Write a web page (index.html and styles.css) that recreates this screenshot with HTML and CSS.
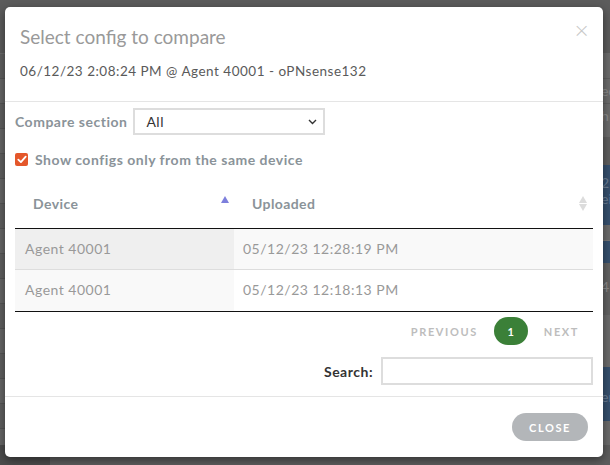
FILE: index.html
```html
<!DOCTYPE html>
<html>
<head>
<meta charset="utf-8">
<link rel="stylesheet" href="styles.css">
</head>
<body>
<div class="page">
  <div class="page-top"></div>
  <div class="page-main">
    <div class="page-left"></div>
    <div class="page-center"></div>
    <div class="page-right">
      <div class="pr r1"></div>
      <div class="pr r2">ed</div>
      <div class="pr r3">h</div>
      <div class="pr r4"></div>
      <div class="pr r5 blue">2<br>ei</div>
      <div class="pr r6"></div>
      <div class="pr r7 blue"></div>
      <div class="pr r8">4</div>
      <div class="pr r9"></div>
      <div class="pr r10 blue">er</div>
      <div class="pr r11"></div>
    </div>
  </div>
  <div class="page-bottom"><div class="pb-left"></div></div>
</div>

<div class="modal">
  <div class="modal-header">
    <div class="modal-title">Select config to compare</div>
    <div class="modal-sub">06/12/23 2:08:24 PM @ Agent 40001 - oPNsense132</div>
    <span class="modal-x">&times;</span>
  </div>
  <div class="modal-body">
    <div class="compare-row">
      <label class="lbl">Compare section</label>
      <div class="select">
        <span>All</span>
        <svg class="chev" width="9" height="6" viewBox="0 0 9 6"><path d="M1 1 L4.5 4.5 L8 1" fill="none" stroke="#333" stroke-width="1.4"/></svg>
      </div>
    </div>
    <div class="check-row">
      <span class="checkbox">
        <svg width="10" height="9" viewBox="0 0 10 9"><path d="M1.3 4.6 L3.9 7.1 L8.7 1.6" fill="none" stroke="#fff" stroke-width="1.8" stroke-linecap="round" stroke-linejoin="round"/></svg>
      </span>
      <span class="lbl">Show configs only from the same device</span>
    </div>
    <div class="table">
      <div class="tr th">
        <div class="c1 hcell">Device<span class="sort-up"></span></div>
        <div class="c2 hcell">Uploaded
          <span class="sort-both"><i class="up"></i><i class="down"></i></span>
        </div>
      </div>
      <div class="tr odd">
        <div class="c1">Agent 40001</div>
        <div class="c2">05/12/23 12:28:19 PM</div>
      </div>
      <div class="tr even">
        <div class="c1">Agent 40001</div>
        <div class="c2">05/12/23 12:18:13 PM</div>
      </div>
    </div>
    <div class="pager">
      <span class="pg">PREVIOUS</span>
      <span class="pg-cur">1</span>
      <span class="pg">NEXT</span>
    </div>
    <div class="search-row">
      <span class="search-lbl">Search:</span>
      <span class="search-input"></span>
    </div>
  </div>
  <div class="modal-footer">
    <span class="btn-close">CLOSE</span>
  </div>
</div>
</body>
</html>
```
FILE: styles.css
```css
* { box-sizing: border-box; }
html, body { margin: 0; padding: 0; }
body {
  width: 610px;
  height: 465px;
  overflow: hidden;
  font-family: Lato, "Open Sans", sans-serif;
  background: #626262;
  position: relative;
}
.page { width: 610px; height: 465px; display: flex; flex-direction: column; }
.page-top { height: 54px; background: #5c5c5c; border-bottom: 1px solid #6c6c6c; }
.page-main { flex: 1; display: flex; }
.page-left {
  width: 50px;
  background: repeating-linear-gradient(180deg, #5f5f5f 0 24px, #545454 24px 25px, #666 25px 49px, #555 49px 50px);
}
.page-center { flex: 1; background: #6a6a6a; }
.page-right { width: 12px; display: flex; flex-direction: column; background: #6b6b6b; color: #8d8d8d; font-size: 14px; line-height: 16px; overflow: hidden; white-space: nowrap; }
.pr { padding-left: 3px; }
.r1 { height: 24px; }
.r2 { height: 25px; border-top: 1px solid #5e5e5e; padding-top: 4px; }
.r3 { height: 34px; border-top: 1px solid #5e5e5e; padding-top: 4px; }
.r4 { height: 28px; background: #5e5e5e; }
.r5 { height: 60px; padding-top: 10px; }
.r6 { height: 16px; border-bottom: 1px solid #777; }
.r7 { height: 22px; }
.r8 { height: 52px; background: #626262; padding-top: 16px; }
.r9 { height: 52px; }
.r10 { height: 54px; padding-top: 22px; }
.r11 { flex: 1; }
.blue { background: #36506e; color: #6b7f96; }
.page-bottom { height: 20px; background: #5d5d5d; }
.pb-left { width: 50px; height: 100%; background: #4c4c4c; }

.modal {
  position: absolute;
  left: 5px;
  top: 7px;
  width: 598px;
  height: 450px;
  background: #fff;
  border-radius: 5px;
  box-shadow: 0 3px 10px rgba(0,0,0,0.45);
  display: flex;
  flex-direction: column;
}
.modal-header {
  position: relative;
  padding: 18px 15px 20px 15px;
  border-bottom: 1px solid #e5e5e5;
  height: 95px;
}
.modal-title { font-size: 19px; line-height: 24px; color: #999; }
.modal-sub { margin-top: 12px; font-size: 13.5px; letter-spacing: 0.5px; line-height: 20px; color: #5a5a5a; }
.modal-x {
  position: absolute;
  right: 13px;
  top: 12px;
  font-size: 20px;
  line-height: 22px;
  color: #c8c8c8;
  font-family: "DejaVu Sans", sans-serif;
  font-weight: 300;
}
.modal-body { flex: 1; padding: 6px 10px 0 10px; }
.compare-row { display: flex; align-items: center; gap: 6px; }
.lbl { font-weight: bold; font-size: 14px; letter-spacing: 0.5px; color: #8a9399; }
.select {
  width: 192px;
  height: 27px;
  border: 2px solid #ddd;
  display: flex;
  align-items: center;
  justify-content: space-between;
  padding: 0 6px 0 11px;
  font-size: 14px;
  letter-spacing: 0.5px;
  color: #333;
}
.check-row { display: flex; align-items: center; gap: 7px; margin-top: 17px; height: 14px; }
.checkbox {
  width: 13px; height: 13px;
  background: #e4572b;
  border-radius: 2px;
  display: flex; align-items: center; justify-content: center;
}
.checkbox svg { display: block; }
.table { margin-top: 19px; border-bottom: 1px solid #111; }
.tr { display: flex; }
.c1 { width: 219px; }
.c2 { flex: 1; }
.th { height: 44px; border-bottom: 1px solid #111; }
.hcell {
  position: relative;
  font-weight: bold;
  font-size: 14px;
  letter-spacing: 0.4px;
  color: #8a9399;
  padding-left: 18px;
  padding-bottom: 6px;
  display: flex;
  align-items: center;
}
.sort-up {
  position: absolute;
  right: 5px;
  top: 11px;
  width: 0; height: 0;
  border-left: 4px solid transparent;
  border-right: 4px solid transparent;
  border-bottom: 7px solid #7d7fdc;
}
.sort-both { position: absolute; right: 6px; top: 10px; width: 8px; height: 18px; }
.sort-both i { position: absolute; left: 0; width: 0; height: 0; border-left: 4px solid transparent; border-right: 4px solid transparent; }
.sort-both .up { top: 1px; border-bottom: 7px solid #dcdcdc; }
.sort-both .down { top: 9px; border-top: 7px solid #dcdcdc; }
.tr.odd, .tr.even { height: 41px; }
.tr.odd { border-bottom: 1px solid #ddd; }
.tr.odd .c1, .tr.even .c1, .tr.odd .c2, .tr.even .c2 {
  display: flex; align-items: center; padding-left: 10px; padding-bottom: 2px; font-size: 14px; letter-spacing: 0.5px; color: #999;
}
.tr.odd .c1 { background: #efefef; }
.tr.odd .c2 { background: #f9f9f9; }
.tr.even .c1 { background: #f9f9f9; }
.tr.even .c2 { background: #fff; }
.tr.odd .c2, .tr.even .c2 { padding-left: 9px; }

.pager { display: flex; justify-content: flex-end; align-items: center; height: 28px; margin-top: 5px; padding-right: 14px; }
.pg { font-size: 11px; font-weight: bold; letter-spacing: 1.6px; color: #bdbdbd; }
.pg-cur {
  width: 34px; height: 28px; margin: 0 16px;
  border-radius: 14px;
  background: #3b8038;
  color: #fff;
  font-size: 11px;
  font-weight: bold;
  display: flex; align-items: center; justify-content: center;
}
.search-row { display: flex; justify-content: flex-end; align-items: center; margin-top: 12px; gap: 8px; }
.search-lbl { font-size: 14px; letter-spacing: 0.5px; font-weight: bold; color: #333; }
.search-input { width: 212px; height: 28px; border: 2px solid #ddd; }
.modal-footer {
  border-top: 1px solid #e5e5e5;
  padding: 16px 15px;
  display: flex;
  justify-content: flex-end;
}
.btn-close {
  width: 76px; height: 28px;
  border-radius: 14px;
  background: #b3b6b9;
  color: #fff;
  font-size: 11px;
  font-weight: bold;
  letter-spacing: 1.6px;
  display: flex; align-items: center; justify-content: center;
}
```
